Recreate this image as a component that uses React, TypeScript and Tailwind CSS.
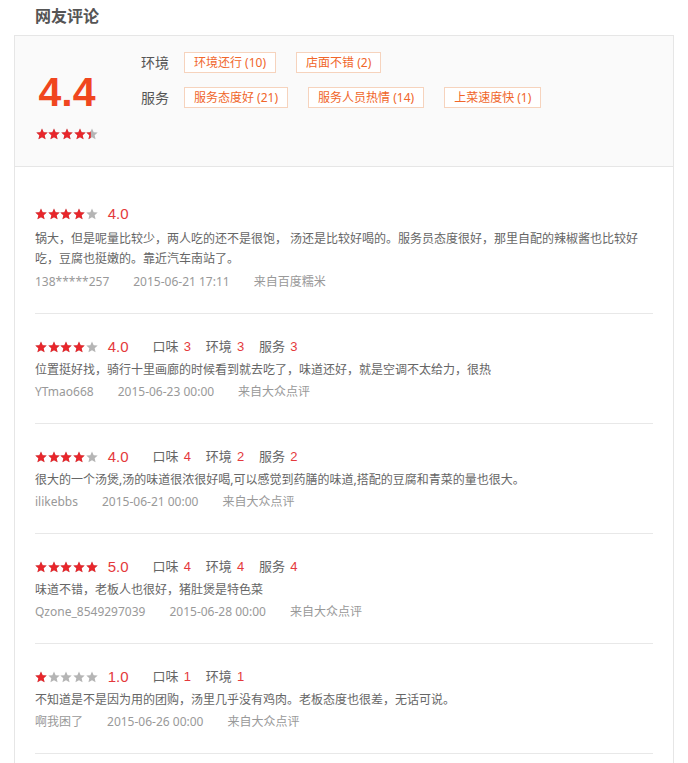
import React from 'react'

type Review = {
  score: number
  scores?: Array<{ name: string; value: number }>
  text: string
  user: string
  time: string
  source: string
}

const tagRows = [
  { label: '环境', tags: ['环境还行 (10)', '店面不错 (2)'] },
  { label: '服务', tags: ['服务态度好 (21)', '服务人员热情 (14)', '上菜速度快 (1)'] },
]

const reviews: Review[] = [
  {
    score: 4,
    text: '锅大，但是呢量比较少，两人吃的还不是很饱， 汤还是比较好喝的。服务员态度很好，那里自配的辣椒酱也比较好吃，豆腐也挺嫩的。靠近汽车南站了。',
    user: '138*****257',
    time: '2015-06-21 17:11',
    source: '来自百度糯米',
  },
  {
    score: 4,
    scores: [
      { name: '口味', value: 3 },
      { name: '环境', value: 3 },
      { name: '服务', value: 3 },
    ],
    text: '位置挺好找，骑行十里画廊的时候看到就去吃了，味道还好，就是空调不太给力，很热',
    user: 'YTmao668',
    time: '2015-06-23 00:00',
    source: '来自大众点评',
  },
  {
    score: 4,
    scores: [
      { name: '口味', value: 4 },
      { name: '环境', value: 2 },
      { name: '服务', value: 2 },
    ],
    text: '很大的一个汤煲,汤的味道很浓很好喝,可以感觉到药膳的味道,搭配的豆腐和青菜的量也很大。',
    user: 'ilikebbs',
    time: '2015-06-21 00:00',
    source: '来自大众点评',
  },
  {
    score: 5,
    scores: [
      { name: '口味', value: 4 },
      { name: '环境', value: 4 },
      { name: '服务', value: 4 },
    ],
    text: '味道不错，老板人也很好，猪肚煲是特色菜',
    user: 'Qzone_8549297039',
    time: '2015-06-28 00:00',
    source: '来自大众点评',
  },
  {
    score: 1,
    scores: [
      { name: '口味', value: 1 },
      { name: '环境', value: 1 },
    ],
    text: '不知道是不是因为用的团购，汤里几乎没有鸡肉。老板态度也很差，无话可说。',
    user: '啊我困了',
    time: '2015-06-26 00:00',
    source: '来自大众点评',
  },
]

const STAR = '6,0.4 7.65,4.2 11.7,4.55 8.65,7.25 9.55,11.3 6,9.15 2.45,11.3 3.35,7.25 0.3,4.55 4.35,4.2'

function Star({ fill, id }: { fill: number; id: string }) {
  return (
    <svg width="12" height="12" viewBox="0 0 12 12" className="block">
      <defs>
        <clipPath id={id}>
          <rect x="0" y="0" width={12 * fill} height="12" />
        </clipPath>
      </defs>
      <polygon points={STAR} fill="#b5b5b5" />
      {fill > 0 && <polygon points={STAR} fill="#e8262b" clipPath={`url(#${id})`} />}
    </svg>
  )
}

function Stars({ value, id }: { value: number; id: string }) {
  return (
    <div className="flex gap-[0.7px]">
      {[0, 1, 2, 3, 4].map((i) => (
        <Star key={i} id={`${id}-${i}`} fill={Math.max(0, Math.min(1, value - i))} />
      ))}
    </div>
  )
}

export default function App() {
  return (
    <div className="h-[763px] overflow-hidden bg-white font-['Noto_Sans','Noto_Sans_CJK_SC',sans-serif] text-[#666]">
      <h2 className="pl-[35px] h-[35px] leading-[32px] text-[16px] font-bold text-[#555]">网友评论</h2>

      <div className="ml-[14px] w-[660px] border border-[#e6e6e6]">
        {/* summary */}
        <div className="flex h-[131px] bg-[#fafafa] border-b border-[#e6e6e6]">
          <div className="w-[126px] pl-[20px]">
            <div className="w-[64px] flex flex-col items-center">
              <div className="mt-[35px] text-[41px] leading-[42px] font-bold text-[#f0461e] font-['Liberation_Sans',sans-serif]">
                4.4
              </div>
              <div className="mt-[15px]">
                <Stars value={4.4} id="sum" />
              </div>
            </div>
          </div>
          <div className="pt-[16px] flex flex-col gap-[14px]">
            {tagRows.map((row) => (
              <div key={row.label} className="flex items-center">
                <span className="w-[43px] text-[14px] text-[#555]">{row.label}</span>
                <div className="flex gap-[20px]">
                  {row.tags.map((t) => (
                    <span
                      key={t}
                      className="h-[21px] px-[9px] leading-[19px] border border-[#f6d3bd] bg-white text-[12px] text-[#f0662a]"
                    >
                      {t}
                    </span>
                  ))}
                </div>
              </div>
            ))}
          </div>
        </div>

        {/* list */}
        <div className="px-[20px] pt-[14px] pb-[20px]">
          {reviews.map((r, idx) => (
            <div key={idx} className="pt-[23px] pb-[21px] border-b border-[#e8e8e8]">
              <div className="flex items-center h-5">
                <Stars value={r.score} id={`r${idx}`} />
                <span className="ml-[10px] text-[15px] text-[#e4393c] font-['Liberation_Sans',sans-serif]">
                  {r.score.toFixed(1)}
                </span>
                <div className="ml-[24px] flex gap-[15px]">
                  {r.scores?.map((s) => (
                    <span key={s.name} className="text-[13px] text-[#666]">
                      {s.name}
                      <span className="ml-[5px] text-[#e4393c] font-['Liberation_Sans',sans-serif]">{s.value}</span>
                    </span>
                  ))}
                </div>
              </div>
              <p className={idx === 0 ? 'mt-[5px] text-[12px] leading-5 text-[#666]' : 'mt-[3px] text-[12px] leading-5 text-[#666]'}>
                {r.text}
              </p>
              <div
                className={
                  idx === 0
                    ? 'mt-[3px] flex gap-[24px] text-[12px] leading-5 text-[#999]'
                    : 'mt-[2px] flex gap-[24px] text-[12px] leading-5 text-[#999]'
                }
              >
                <span>{r.user}</span>
                <span>{r.time}</span>
                <span>{r.source}</span>
              </div>
            </div>
          ))}
        </div>
      </div>
    </div>
  )
}
